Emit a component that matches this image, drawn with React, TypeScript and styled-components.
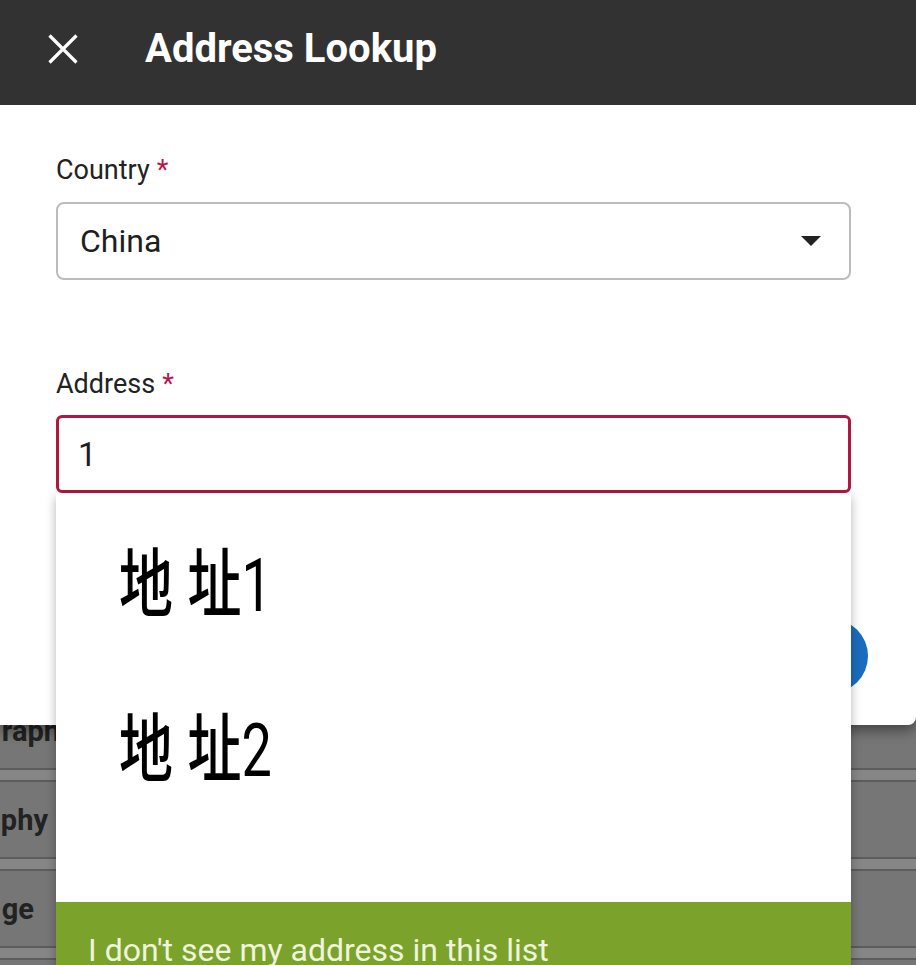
import React from "react";
import styled, { createGlobalStyle } from "styled-components";

const GlobalStyle = createGlobalStyle`
  html, body {
    margin: 0;
    padding: 0;
    background: #767676;
    overflow: hidden;
  }
  body {
    font-family: Roboto, "Noto Sans", "Liberation Sans", sans-serif;
  }
  * { box-sizing: border-box; }
`;

const Page = styled.div`
  width: 916px;
  height: 965px;
  overflow: hidden;
  display: flex;
  flex-direction: column;
  background: #767676;
`;

const Modal = styled.section`
  position: relative;
  z-index: 2;
  flex: none;
  background: #ffffff;
  border-radius: 0 0 8px 0;
  box-shadow: 0 5px 14px rgba(0, 0, 0, 0.45);
  display: flex;
  flex-direction: column;
`;

const Header = styled.header`
  height: 105px;
  background: #323232;
  display: flex;
  align-items: center;
  padding: 0 0 7px 48px;
`;

const CloseButton = styled.button`
  width: 30px;
  height: 30px;
  padding: 0;
  border: 0;
  background: transparent;
  display: flex;
  cursor: pointer;
`;

const Title = styled.h1`
  margin: 0 0 0 67px;
  font-size: 40px;
  line-height: 44px;
  font-weight: 700;
  color: #ffffff;
`;

const Body = styled.div`
  padding: 49px 65px 32px 56px;
  display: flex;
  flex-direction: column;
`;

const Field = styled.div<{ $gap?: number }>`
  display: flex;
  flex-direction: column;
  margin-top: ${(p) => p.$gap ?? 0}px;
`;

const Label = styled.label<{ $mb: number }>`
  font-size: 27px;
  line-height: 32px;
  color: #222222;
  margin-bottom: ${(p) => p.$mb}px;
`;

const Required = styled.span`
  color: #b8134a;
  margin-left: 7px;
`;

const Select = styled.div`
  height: 78px;
  border: 2px solid #bcbcbc;
  border-radius: 8px;
  padding: 0 28px 0 22px;
  display: flex;
  align-items: center;
  justify-content: space-between;
  font-size: 32px;
  color: #1e1e1e;
`;

const Caret = styled.span`
  width: 0;
  height: 0;
  border-left: 10px solid transparent;
  border-right: 10px solid transparent;
  border-top: 10px solid #222222;
`;

const AutoWrap = styled.div`
  position: relative;
`;

const Input = styled.div`
  height: 78px;
  border: 3px solid #b0183f;
  border-radius: 6px;
  padding: 0 19px;
  display: flex;
  align-items: center;
  font-size: 33px;
  color: #1e1e1e;
`;

const Dropdown = styled.div`
  position: absolute;
  z-index: 3;
  top: 100%;
  left: 0;
  right: 0;
  height: 520px;
  background: #ffffff;
  box-shadow: 0 4px 10px rgba(0, 0, 0, 0.3);
  display: flex;
  flex-direction: column;
`;

const OptionList = styled.ul`
  list-style: none;
  margin: 0;
  padding: 6px 0 0;
  height: 409px;
  flex: none;
`;

const Option = styled.li`
  height: 165px;
  padding-left: 63px;
  display: flex;
  align-items: center;
`;

const OptionText = styled.span`
  display: inline-block;
  font-family: "Noto Sans CJK SC", "Noto Sans", sans-serif;
  font-size: 75px;
  font-weight: 500;
  line-height: 1;
  color: #000000;
  transform: scaleX(0.72);
  transform-origin: left center;
  white-space: nowrap;
`;

const Spaced = styled.span`
  letter-spacing: 20px;
`;

const Digit = styled.span`
  font-family: Roboto, "Noto Sans", sans-serif;
  font-weight: 400;
`;

const NotListed = styled.div`
  flex: 1;
  background: #7ba22b;
  color: #eef4dd;
  font-size: 32px;
  line-height: 38px;
  padding: 29px 32px;
`;

const Actions = styled.div`
  margin-top: 126px;
  margin-right: -17px;
  display: flex;
  justify-content: flex-end;
`;

const RoundButton = styled.button`
  width: 74px;
  height: 74px;
  border: 0;
  border-radius: 50%;
  background: #1a6dbd;
`;

const Backdrop = styled.div`
  margin-top: -32px;
  display: flex;
  flex-direction: column;
`;

const Row = styled.div`
  height: 75px;
  display: flex;
  align-items: center;
`;

const RowLabel = styled.span<{ $w: number }>`
  width: ${(p) => p.$w}px;
  text-align: right;
  font-size: 29px;
  font-weight: 700;
  color: #222222;
  white-space: nowrap;
`;

const Separator = styled.div`
  height: 14px;
  border-top: 2px solid #5c5c5c;
  border-bottom: 2px solid #5c5c5c;
  background: #868686;
`;

const rows = [
  { text: "raph", w: 60 },
  { text: "phy", w: 48 },
  { text: "ge", w: 34 },
];

const options = ["1", "2"];

export default function App() {
  return (
    <>
      <GlobalStyle />
      <Page>
        <Modal>
          <Header>
            <CloseButton aria-label="Close">
              <svg width="30" height="30" viewBox="0 0 30 30">
                <path d="M1.5 1.5 L28.5 28.5 M28.5 1.5 L1.5 28.5" stroke="#ffffff" strokeWidth="3.2" fill="none" />
              </svg>
            </CloseButton>
            <Title>Address Lookup</Title>
          </Header>
          <Body>
            <Field>
              <Label $mb={16}>
                Country<Required>*</Required>
              </Label>
              <Select>
                <span>China</span>
                <Caret />
              </Select>
            </Field>
            <Field $gap={88}>
              <Label $mb={15}>
                Address<Required>*</Required>
              </Label>
              <AutoWrap>
                <Input>1</Input>
                <Dropdown>
                  <OptionList>
                    {options.map((n) => (
                      <Option key={n}>
                        <OptionText>
                          <Spaced>地</Spaced>址<Digit>{n}</Digit>
                        </OptionText>
                      </Option>
                    ))}
                  </OptionList>
                  <NotListed>I don't see my address in this list</NotListed>
                </Dropdown>
              </AutoWrap>
            </Field>
            <Actions>
              <RoundButton aria-label="Search" />
            </Actions>
          </Body>
        </Modal>
        <Backdrop>
          {rows.map((r) => (
            <React.Fragment key={r.text}>
              <Row>
                <RowLabel $w={r.w}>{r.text}</RowLabel>
              </Row>
              <Separator />
            </React.Fragment>
          ))}
        </Backdrop>
      </Page>
    </>
  );
}
